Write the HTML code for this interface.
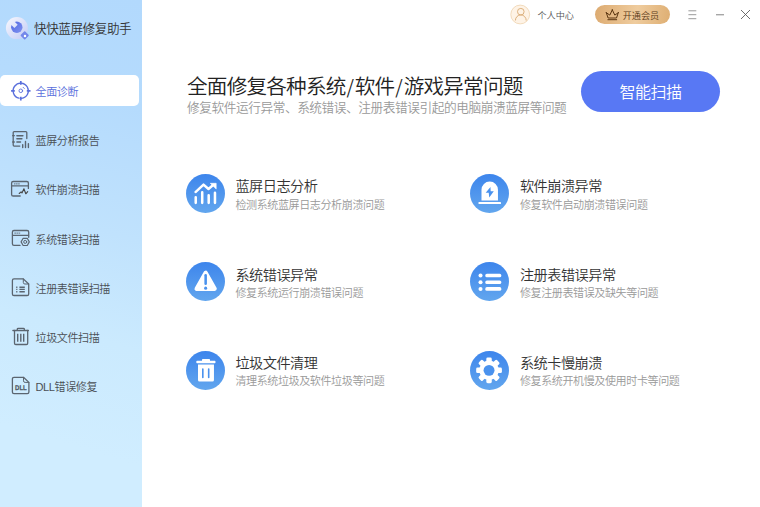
<!DOCTYPE html>
<html lang="zh-CN">
<head>
<meta charset="utf-8">
<title>快快蓝屏修复助手</title>
<style>
*{box-sizing:border-box;margin:0;padding:0}
html,body{width:760px;height:507px;overflow:hidden;background:#fff}
body{font-family:"Liberation Sans","Noto Sans CJK SC",sans-serif;color:#333;position:relative}
.abs{position:absolute;white-space:nowrap}
#side{position:absolute;left:0;top:0;width:141.5px;height:507px;background:linear-gradient(197deg,#b2d9fd 0%,#b5dbfd 20%,#c0e2fd 44%,#cbeafe 64%,#d0edff 85%,#d0edff 100%)}
#appname{font-weight:350;left:34px;top:20.3px;font-size:12.6px;letter-spacing:-0.44px;line-height:18px;color:#333}
.nav{position:absolute;left:0;width:139px;height:31px;border-radius:5px}
.nav.on{background:#fff}
.nav span{position:absolute;left:35.5px;top:1.5px;font-weight:350;line-height:31px;font-size:11.05px;letter-spacing:-0.41px;color:#4a4f55;white-space:nowrap}
.nav.on span{color:#5a6fdc}
.ni{position:absolute;left:5px;width:32px;height:32px;fill:none;stroke:#5b6570;stroke-width:1.3;stroke-linecap:round;stroke-linejoin:round}
h1{font-weight:350;font-size:20.6px;letter-spacing:-0.77px;line-height:26px;left:187px;top:73px;color:#222}
h1 i{font-size:19px;font-style:normal;font-family:'Noto Sans CJK SC',sans-serif;display:inline-block;width:9.2px;text-align:center;letter-spacing:0}
#sub{font-weight:350;left:187px;top:99.7px;font-size:12.7px;letter-spacing:-0.45px;line-height:16px;color:#999}
#scan{left:581px;top:71px;width:139px;height:40.6px;border-radius:20.5px;background:#5878f4;color:#fff;font-size:16px;letter-spacing:-0.5px;font-weight:350;line-height:43.2px;text-align:center;overflow:hidden}
.feat{position:absolute;width:260px;height:40px}
.feat svg{position:absolute;left:0;top:0;width:39px;height:39px}
.feat .t{position:absolute;left:49.5px;top:3.6px;font-weight:350;font-size:14.2px;letter-spacing:-0.52px;line-height:18px;color:#333;white-space:nowrap}
.feat.r1 .t{top:2.5px}
.feat .d{position:absolute;left:49.5px;top:23.5px;font-weight:350;font-size:11.05px;letter-spacing:-0.41px;line-height:14px;color:#999;white-space:nowrap}
#uc{font-weight:350;left:537.5px;top:9px;font-size:9.12px;line-height:14px;color:#555}
#vip{left:594.7px;top:4.5px;width:75.2px;height:19.8px;border-radius:10px;background:linear-gradient(100deg,#dcaa70,#efcc9e 55%,#deae72)}
#vip span{font-weight:350;position:absolute;left:28px;top:0;line-height:22.4px;font-size:9.12px;color:#5a3a18}
</style>
</head>
<body>
<svg width="0" height="0" style="position:absolute">
  <defs>
    <linearGradient id="fg" x1="0" y1="0" x2="0" y2="1"><stop offset="0" stop-color="#3d85ec"/><stop offset="1" stop-color="#62a6ee"/></linearGradient>
    <linearGradient id="lg" x1="0.1" y1="0.1" x2="0.9" y2="0.9"><stop offset="0" stop-color="#f3f4fd"/><stop offset="1" stop-color="#c6cff6"/></linearGradient>
    <linearGradient id="wg" x1="0" y1="0" x2="1" y2="1"><stop offset="0" stop-color="#5168e2"/><stop offset="1" stop-color="#7f92f0"/></linearGradient>
  </defs>
</svg>
<div id="side">
  <svg class="abs" style="left:2px;top:12px" width="32" height="32" viewBox="0 0 32 32">
    <mask id="wm"><rect width="32" height="32" fill="#fff"/><rect x="-2.3" y="-9" width="4.6" height="8.0" fill="#000" transform="translate(14.8 15.2) rotate(-45)"/></mask>
    <circle cx="14.9" cy="16.1" r="11" fill="url(#lg)"/>
    <circle cx="14.8" cy="15.2" r="5.7" fill="url(#wg)" mask="url(#wm)"/>
    <rect x="19.6" y="20.3" width="6.2" height="6.2" rx="0.8" transform="rotate(45 22.7 23.4)" fill="#7388ea"/>
    <circle cx="23" cy="23.9" r="1.25" fill="#fff"/>
  </svg>
  <div id="appname" class="abs">快快蓝屏修复助手</div>

  <div class="nav on" style="top:75.3px"><span>全面诊断</span></div>
  <div class="nav" style="top:124.5px"><span>蓝屏分析报告</span></div>
  <div class="nav" style="top:173.8px"><span>软件崩溃扫描</span></div>
  <div class="nav" style="top:223px"><span>系统错误扫描</span></div>
  <div class="nav" style="top:272.3px"><span>注册表错误扫描</span></div>
  <div class="nav" style="top:321.5px"><span>垃圾文件扫描</span></div>
  <div class="nav" style="top:370.8px"><span>DLL错误修复</span></div>

  <!-- nav icons -->
  <svg class="ni" style="top:75px;stroke:#5a6fdc" viewBox="0 0 32 32">
    <path d="M14 23.2A7.6 7.6 0 1 1 16.6 23.35" stroke-width="1.35"/>
    <path d="M15.8 6.1v3.7M15.8 21.8v3.7M6.1 15.8h3.7M21.8 15.8h3.7" stroke-width="1.7" stroke-linecap="butt"/>
    <circle cx="15.8" cy="15.8" r="1.8" stroke-width="0.9"/>
    <path d="M18.1 12.3l1.2 1.2" stroke-width="0.9"/>
  </svg>
  <svg class="ni" style="top:124px" viewBox="0 0 32 32">
    <path d="M14.8 22.1H9.2a1 1 0 0 1-1-1V8.6a1 1 0 0 1 1-1h11.6a1 1 0 0 1 1 1v5.9"/>
    <path d="M7.7 11.7h1.6M7.7 18h1.6"/>
    <path d="M11.9 11.7h6M11.9 14.8h5M11.9 17.9h3.6" stroke-width="1.45"/>
    <path d="M17.7 20.6v3M20.5 17.4v6.2M23.4 19.6v4" stroke-width="1.4"/>
  </svg>
  <svg class="ni" style="top:173px" viewBox="0 0 32 32">
    <path d="M15.2 23H8.2a1.6 1.6 0 0 1-1.6-1.6V10.1a1.6 1.6 0 0 1 1.6-1.6h13.6a1.6 1.6 0 0 1 1.6 1.6v5.3"/>
    <path d="M6.8 12.9h16.4"/>
    <path d="M9.3 10.9h0.9M11.4 10.9h0.9M13.5 10.9h0.9" stroke-width="0.9"/>
    <path d="M14.2 20.5l1.9-1.6 0.9 1 1.9-4.1 1.9 5 1.9-2.2" stroke-width="1.1" stroke="#444"/>
  </svg>
  <svg class="ni" style="top:222px" viewBox="0 0 32 32">
    <path d="M15 23.4H9a1.6 1.6 0 0 1-1.6-1.6V10.1A1.6 1.6 0 0 1 9 8.5h13.1a1.6 1.6 0 0 1 1.6 1.6v5.2"/>
    <path d="M7.6 13.3h15.9"/>
    <path d="M9.7 11.1h0.9M11.8 11.1h0.9M13.9 11.1h0.9" stroke-width="0.9"/>
    <path d="M16.1 19.9l2.05-3.6h4.1l2.05 3.6-2.05 3.6h-4.1z" stroke-width="1.15"/>
    <circle cx="20.2" cy="19.9" r="1.5" stroke-width="1"/>
  </svg>
  <svg class="ni" style="top:272px" viewBox="0 0 32 32">
    <path d="M18.3 6.9H9a1.6 1.6 0 0 0-1.6 1.6v13.4A1.6 1.6 0 0 0 9 23.5h13.1a1.6 1.6 0 0 0 1.6-1.6V12z"/>
    <path d="M18.3 6.9v3.5a1.6 1.6 0 0 0 1.6 1.6h3.8" stroke-width="1"/>
    <path d="M11.2 15.2h1.2M11.2 17.4h1.2M11.2 19.7h1.2M14.4 15.2h5.4M14.4 17.4h5.4M14.4 19.7h5.4" stroke-width="1.4" stroke-linecap="butt"/>
  </svg>
  <svg class="ni" style="top:321px" viewBox="0 0 32 32">
    <path d="M7.9 9.5h15.5M12.3 9.5V8.1a0.8 0.8 0 0 1 0.8-0.8h5.4a0.8 0.8 0 0 1 0.8 0.8v1.4"/>
    <path d="M9.5 9.5v12.7a1.3 1.3 0 0 0 1.3 1.3h10.6a1.3 1.3 0 0 0 1.3-1.3V9.5"/>
    <path d="M12.7 12.7v8M15.8 12.7v8M18.7 12.7v8" stroke-width="1.4" stroke-linecap="butt"/>
  </svg>
  <svg class="ni" style="top:370px" viewBox="0 0 32 32">
    <path d="M18.5 7.3H9a1.6 1.6 0 0 0-1.6 1.6v13.2A1.6 1.6 0 0 0 9 23.7h13.3a1.6 1.6 0 0 0 1.6-1.6V12.4z"/>
    <path d="M18.5 7.3v3.5a1.6 1.6 0 0 0 1.6 1.6h3.8" stroke-width="1"/>
    <text x="10" y="19.75" textLength="11.8" lengthAdjust="spacingAndGlyphs" font-family="Liberation Sans, sans-serif" font-weight="700" font-size="6.9" fill="#4f5862" stroke="#4f5862" stroke-width="0.25" style="text-rendering:geometricPrecision">DLL</text>
  </svg>
</div>

<!-- top bar -->
<svg class="abs" style="left:504px;top:0" width="30" height="30" viewBox="0 0 30 30">
  <circle cx="16.2" cy="14.5" r="9.4" fill="#fef3e6" stroke="#efd3ae" stroke-width="0.8"/>
  <circle cx="16.8" cy="11.7" r="3.3" fill="none" stroke="#d8a973" stroke-width="0.9"/>
  <path d="M11.4 20.1a5.4 5.2 0 0 1 10.8 0" fill="none" stroke="#d8a973" stroke-width="0.9" stroke-linecap="round"/>
</svg>
<div id="uc" class="abs">个人中心</div>
<div id="vip" class="abs">
  <svg class="abs" style="left:-4.7px;top:-4.5px" width="40" height="30" viewBox="0 0 40 30">
    <path d="M16.3 12.7l1.8 5.3h8.4l1.8-5.3-3.5 2.4-2.5-5.2-2.5 5.2z" fill="none" stroke="#5a3510" stroke-width="1" stroke-linejoin="round"/>
    <path d="M17.9 19.7h8.8" stroke="#5a3510" stroke-width="1" stroke-linecap="round"/>
    <circle cx="16.2" cy="12.5" r="0.6" fill="#5a3510"/><circle cx="28.4" cy="12.5" r="0.6" fill="#5a3510"/><circle cx="22.3" cy="9.7" r="0.6" fill="#5a3510"/>
  </svg>
  <span>开通会员</span>
</div>
<svg class="abs" style="left:680px;top:0" width="80" height="30" viewBox="0 0 80 30">
  <path d="M8.4 10.8h7.9M8.4 14.7h7.9M8.4 18.7h7.9" stroke="#9a9a9a" stroke-width="1"/>
  <path d="M36 14.7h8" stroke="#a6a6a6" stroke-width="1.4"/>
  <path d="M61 10l9 9M70 10l-9 9" stroke="#555" stroke-width="0.85"/>
</svg>

<h1 class="abs">全面修复各种系统<i>/</i>软件<i>/</i>游戏异常问题</h1>
<div id="sub" class="abs">修复软件运行异常、系统错误、注册表错误引起的电脑崩溃蓝屏等问题</div>
<div id="scan" class="abs">智能扫描</div>

<div class="feat r1" style="left:185.9px;top:174.4px">
  <svg viewBox="0 0 38.5 38.5"><circle cx="19.25" cy="19.25" r="19.25" fill="url(#fg)"/>
    <path d="M9.6 22.9v5.6M16 18v10.5M22.4 20.9v7.6M28.6 18.5v10" stroke="#fff" stroke-width="2.5" stroke-linecap="round" fill="none"/>
    <path d="M9.4 17.8l7.9-7.4 4.9 4.4 4.6-3.9" stroke="#fff" stroke-width="2.4" stroke-linecap="round" stroke-linejoin="round" fill="none"/>
    <path d="M24 9.2h5.8v5.6z" fill="#fff" stroke="#fff" stroke-width="0.6" stroke-linejoin="round"/>
  </svg>
  <div class="t">蓝屏日志分析</div><div class="d">检测系统蓝屏日志分析崩溃问题</div></div>
<div class="feat r1" style="left:470.4px;top:174.4px">
  <svg viewBox="0 0 38.5 38.5"><circle cx="19.25" cy="19.25" r="19.25" fill="url(#fg)"/>
    <path d="M11.35 26.2V15.5a8.1 8.1 0 0 1 16.25 0v10.7z" fill="#fff"/>
    <rect x="8.4" y="27.6" width="22.2" height="2" rx="0.6" fill="#fff"/>
    <path d="M20.2 12.8l-4.7 5.8h3l0.5 4.6 4.5-6.1h-3.1z" fill="#4a92ee"/>
  </svg>
  <div class="t">软件崩溃异常</div><div class="d">修复软件启动崩溃错误问题</div></div>
<div class="feat" style="left:185.9px;top:262.4px">
  <svg viewBox="0 0 38.5 38.5"><circle cx="19.25" cy="19.25" r="19.25" fill="url(#fg)"/>
    <path d="M19.4 10.6l-8.9 15.9h17.8z" fill="#fff" stroke="#fff" stroke-width="4.2" stroke-linejoin="round"/>
    <path d="M19.4 13.2v8.2" stroke="#4a92ee" stroke-width="2.5" stroke-linecap="round"/>
    <circle cx="19.4" cy="25.8" r="1.5" fill="#4a92ee"/>
  </svg>
  <div class="t">系统错误异常</div><div class="d">修复系统运行崩溃错误问题</div></div>
<div class="feat" style="left:470.4px;top:262.4px">
  <svg viewBox="0 0 38.5 38.5"><circle cx="19.25" cy="19.25" r="19.25" fill="url(#fg)"/>
    <circle cx="10.4" cy="13.3" r="2" fill="#fff"/><circle cx="10.4" cy="20" r="2" fill="#fff"/><circle cx="10.4" cy="26.6" r="2" fill="#fff"/>
    <rect x="15.1" y="11.5" width="15.8" height="3.6" rx="1.6" fill="#fff"/><rect x="15.1" y="18.2" width="15.8" height="3.6" rx="1.6" fill="#fff"/><rect x="15.1" y="24.8" width="15.8" height="3.6" rx="1.6" fill="#fff"/>
  </svg>
  <div class="t">注册表错误异常</div><div class="d">修复注册表错误及缺失等问题</div></div>
<div class="feat" style="left:185.9px;top:350.9px">
  <svg viewBox="0 0 38.5 38.5"><circle cx="19.25" cy="19.25" r="19.25" fill="url(#fg)"/>
    <path d="M15.8 9.6V8.7a0.8 0.8 0 0 1 0.8-0.8h6.3a0.8 0.8 0 0 1 0.8 0.8v0.9h4.7a0.7 0.7 0 0 1 0.7 0.7v1a0.7 0.7 0 0 1-0.7 0.7H10.9a0.7 0.7 0 0 1-0.7-0.7v-1a0.7 0.7 0 0 1 0.7-0.7z" fill="#fff"/>
    <path d="M11.85 13.3h15.75v15.3a1.5 1.5 0 0 1-1.5 1.5H13.35a1.5 1.5 0 0 1-1.5-1.5z" fill="#fff"/>
    <path d="M16.6 17.8v8.3M22.4 17.8v8.3" stroke="#4a92ee" stroke-width="1.6" stroke-linecap="round"/>
  </svg>
  <div class="t">垃圾文件清理</div><div class="d">清理系统垃圾及软件垃圾等问题</div></div>
<div class="feat" style="left:470.4px;top:350.9px">
  <svg viewBox="0 0 38.5 38.5"><circle cx="19.25" cy="19.25" r="19.25" fill="url(#fg)"/>
    <g transform="translate(18.8 19.1)" fill="#fff">
      <circle r="9.6"/>
      <g id="teeth"><rect x="-2.7" y="-12.7" width="5.4" height="6" rx="1.4"/><rect x="-2.7" y="6.7" width="5.4" height="6" rx="1.4"/></g>
      <use href="#teeth" transform="rotate(45)"/><use href="#teeth" transform="rotate(90)"/><use href="#teeth" transform="rotate(135)"/>
      <circle r="5.4" fill="#4a92ee"/>
    </g>
  </svg>
  <div class="t">系统卡慢崩溃</div><div class="d">修复系统开机慢及使用时卡等问题</div></div>
</body>
</html>
